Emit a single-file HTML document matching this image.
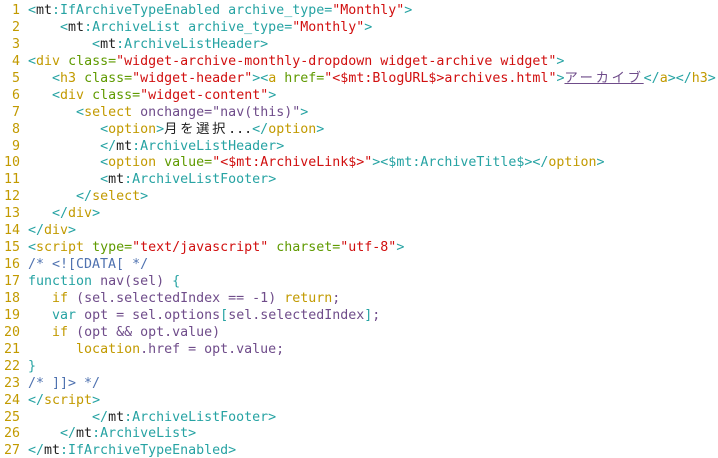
<!DOCTYPE html>
<html><head><meta charset="utf-8"><style>
html,body{margin:0;padding:0;background:#fff;width:718px;height:458px;overflow:hidden}
pre{margin:0;padding:3px 0 0 0;font-family:"DejaVu Sans Mono","Liberation Mono","Noto Sans CJK JP",monospace;font-size:13.3px;line-height:16.93px;color:#222;white-space:pre}
.n{color:#c29a00;display:inline-block;width:20px;text-align:right;margin-right:8px}
.t{color:#26a3a3}.g{color:#c29a00}.r{color:#d10f0f}.a{color:#5f9a00}.p{color:#6f4c8a}.c{color:#4f72b0}.k{color:#222}
.j{font-family:"Noto Sans CJK JP",sans-serif;letter-spacing:2.7px;line-height:1px}
.u{text-decoration:underline;color:#6f4c8a}
</style></head><body><pre><span class="n">1</span><span class="t">&lt;</span><span class="k">mt</span><span class="t">:IfArchiveTypeEnabled archive_type=</span><span class="r">"Monthly"</span><span class="t">&gt;</span>
<span class="n">2</span>    <span class="t">&lt;</span><span class="k">mt</span><span class="t">:ArchiveList archive_type=</span><span class="r">"Monthly"</span><span class="t">&gt;</span>
<span class="n">3</span>        <span class="t">&lt;</span><span class="k">mt</span><span class="t">:ArchiveListHeader&gt;</span>
<span class="n">4</span><span class="t">&lt;</span><span class="g">div</span> <span class="a">class=</span><span class="r">"widget-archive-monthly-dropdown widget-archive widget"</span><span class="t">&gt;</span>
<span class="n">5</span>   <span class="t">&lt;</span><span class="g">h3</span> <span class="a">class=</span><span class="r">"widget-header"</span><span class="t">&gt;&lt;</span><span class="g">a</span> <span class="a">href=</span><span class="r">"&lt;$mt:BlogURL$&gt;archives.html"</span><span class="t">&gt;</span><span class="u j">アーカイブ</span><span class="t">&lt;/</span><span class="g">a</span><span class="t">&gt;&lt;/</span><span class="g">h3</span><span class="t">&gt;</span>
<span class="n">6</span>   <span class="t">&lt;</span><span class="g">div</span> <span class="a">class=</span><span class="r">"widget-content"</span><span class="t">&gt;</span>
<span class="n">7</span>      <span class="t">&lt;</span><span class="g">select</span> <span class="p">onchange="nav(this)"</span><span class="t">&gt;</span>
<span class="n">8</span>         <span class="t">&lt;</span><span class="g">option</span><span class="t">&gt;</span><span class="j k">月を選択</span><span class="k">...</span><span class="t">&lt;/</span><span class="g">option</span><span class="t">&gt;</span>
<span class="n">9</span>         <span class="t">&lt;/</span><span class="k">mt</span><span class="t">:ArchiveListHeader&gt;</span>
<span class="n">10</span>         <span class="t">&lt;</span><span class="g">option</span> <span class="a">value=</span><span class="r">"&lt;$mt:ArchiveLink$&gt;"</span><span class="t">&gt;&lt;$mt:ArchiveTitle$&gt;&lt;/</span><span class="g">option</span><span class="t">&gt;</span>
<span class="n">11</span>         <span class="t">&lt;</span><span class="k">mt</span><span class="t">:ArchiveListFooter&gt;</span>
<span class="n">12</span>      <span class="t">&lt;/</span><span class="g">select</span><span class="t">&gt;</span>
<span class="n">13</span>   <span class="t">&lt;/</span><span class="g">div</span><span class="t">&gt;</span>
<span class="n">14</span><span class="t">&lt;/</span><span class="g">div</span><span class="t">&gt;</span>
<span class="n">15</span><span class="t">&lt;</span><span class="g">script</span> <span class="a">type=</span><span class="r">"text/javascript"</span> <span class="a">charset=</span><span class="r">"utf-8"</span><span class="t">&gt;</span>
<span class="n">16</span><span class="c">/* &lt;![CDATA[ */</span>
<span class="n">17</span><span class="t">function</span> <span class="p">nav(sel)</span> <span class="t">{</span>
<span class="n">18</span>   <span class="g">if</span> <span class="p">(sel.selectedIndex == -1)</span> <span class="g">return</span><span class="p">;</span>
<span class="n">19</span>   <span class="t">var</span> <span class="p">opt = sel.options</span><span class="t">[</span><span class="p">sel.selectedIndex</span><span class="t">]</span><span class="p">;</span>
<span class="n">20</span>   <span class="g">if</span> <span class="p">(opt &amp;&amp; opt.value)</span>
<span class="n">21</span>      <span class="g">location</span><span class="p">.href = opt.value;</span>
<span class="n">22</span><span class="t">}</span>
<span class="n">23</span><span class="c">/* ]]&gt; */</span>
<span class="n">24</span><span class="t">&lt;/</span><span class="g">script</span><span class="t">&gt;</span>
<span class="n">25</span>        <span class="t">&lt;/</span><span class="k">mt</span><span class="t">:ArchiveListFooter&gt;</span>
<span class="n">26</span>    <span class="t">&lt;/</span><span class="k">mt</span><span class="t">:ArchiveList&gt;</span>
<span class="n">27</span><span class="t">&lt;/</span><span class="k">mt</span><span class="t">:IfArchiveTypeEnabled&gt;</span></pre></body></html>
